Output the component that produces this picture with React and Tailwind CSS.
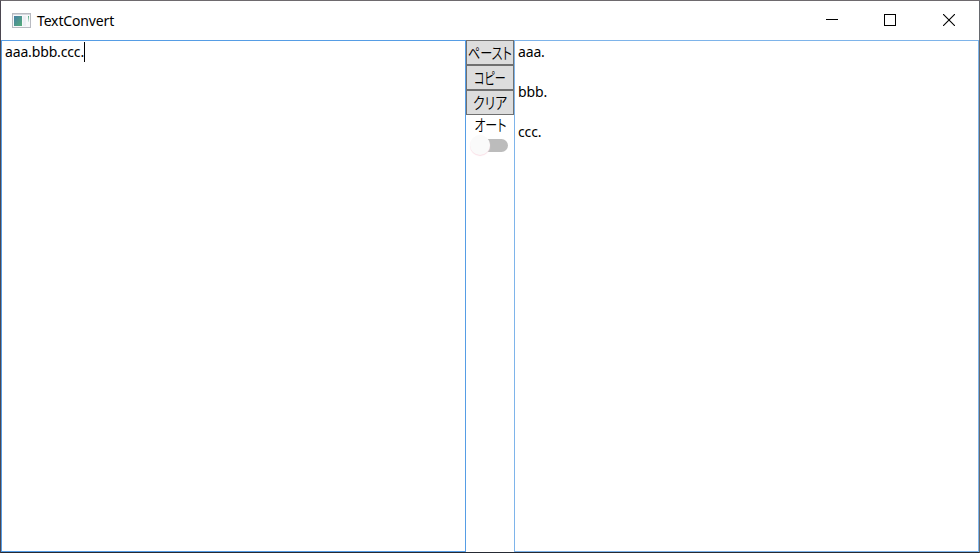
const JP = "font-['Noto_Sans_CJK_JP',sans-serif] font-[350]";

function ConvertButton({ label, scale }) {
  return (
    <button className="flex h-[25px] w-full items-center justify-center border border-[#707070] bg-[#dddddd] pb-[2px]">
      <span className={`${JP} ${scale} text-[16px] leading-[20px] whitespace-nowrap [font-feature-settings:'palt']`}>{label}</span>
    </button>
  );
}

function AppIcon() {
  return (
    <svg width="19" height="15" viewBox="0 0 19 15" className="-mt-px shrink-0" shapeRendering="crispEdges">
      <defs>
        <linearGradient id="screen" x1="0" y1="0" x2="1" y2="1">
          <stop offset="0" stopColor="#477fa5" />
          <stop offset="1" stopColor="#55ad79" />
        </linearGradient>
        <linearGradient id="strip" x1="0" y1="0" x2="0" y2="1">
          <stop offset="0" stopColor="#55a982" />
          <stop offset="1" stopColor="#dcefe8" />
        </linearGradient>
      </defs>
      <rect x=".5" y=".5" width="18" height="14" fill="#f8f8fa" stroke="#b8bac1" />
      <rect x="1" y="1" width="17" height="1" fill="#d5d8de" />
      <rect x="2" y="3" width="8" height="10" fill="url(#screen)" />
      <rect x="11" y="3" width="3" height="10" fill="#eceff4" />
      <rect x="16" y="3" width="1" height="6" fill="url(#strip)" />
    </svg>
  );
}

export default function App() {
  return (
    <div className="flex h-[553px] w-[980px] flex-col overflow-hidden border border-t-[#6e6a6e] border-r-[#66696e] border-b-[#262a33] border-l-[#4b4650] bg-white font-['Noto_Sans',sans-serif] text-[14px] tracking-[-0.15px] text-black">
      <header className="flex h-[39px] shrink-0 items-center justify-between pl-[11px]">
        <div className="flex items-center gap-[6px]">
          <AppIcon />
          <span className="leading-[20px]">TextConvert</span>
        </div>
        <div className="flex h-full">
          <button className="flex w-[58px] items-center justify-center pb-px" aria-label="Minimize">
            <svg width="12" height="12" shapeRendering="crispEdges"><path d="M0 5.5H12" stroke="#000" /></svg>
          </button>
          <button className="flex w-[58px] items-center justify-center pb-px" aria-label="Maximize">
            <svg width="12" height="12" shapeRendering="crispEdges"><rect x=".5" y=".5" width="11" height="11" fill="none" stroke="#000" /></svg>
          </button>
          <button className="flex w-[60px] items-center justify-center pb-px" aria-label="Close">
            <svg width="12" height="12"><path d="M0 0L12 12M12 0L0 12" stroke="#000" strokeWidth="1.1" /></svg>
          </button>
        </div>
      </header>
      <main className="flex min-h-0 flex-1">
        <section className="flex w-[465px] items-start border border-[#569de5] pt-px pl-[3px]">
          <span className="leading-[20px]">aaa.bbb.ccc.</span>
          <span className="h-[20px] w-px bg-black" />
        </section>
        <aside className="flex w-[48px] flex-col items-center tracking-normal">
          <ConvertButton label="ペースト" scale="scale-x-[0.76]" />
          <ConvertButton label="コピー" scale="scale-x-[0.69]" />
          <ConvertButton label="クリア" scale="scale-x-[0.8]" />
          <span className={`${JP} -mt-px scale-x-[0.75] text-[16px] leading-[20px] whitespace-nowrap [font-feature-settings:'palt']`}>オート</span>
          <div className="mr-[2px] flex h-[22px] w-[38px] items-center">
            <span className="z-10 h-[20px] w-[20px] shrink-0 rounded-full bg-[#fafafa] shadow-[0_1px_1px_#f9dfe6]" />
            <span className="-ml-[9px] h-[13px] w-[27px] rounded-full bg-[#bcbcbc]" />
          </div>
        </aside>
        <section className="flex w-[465px] flex-col border border-[#7eb4ea] pt-px pl-[3px]">
          <p className="h-[40px] leading-[20px]">aaa.</p>
          <p className="h-[40px] leading-[20px]">bbb.</p>
          <p className="h-[40px] leading-[20px]">ccc.</p>
        </section>
      </main>
    </div>
  );
}
